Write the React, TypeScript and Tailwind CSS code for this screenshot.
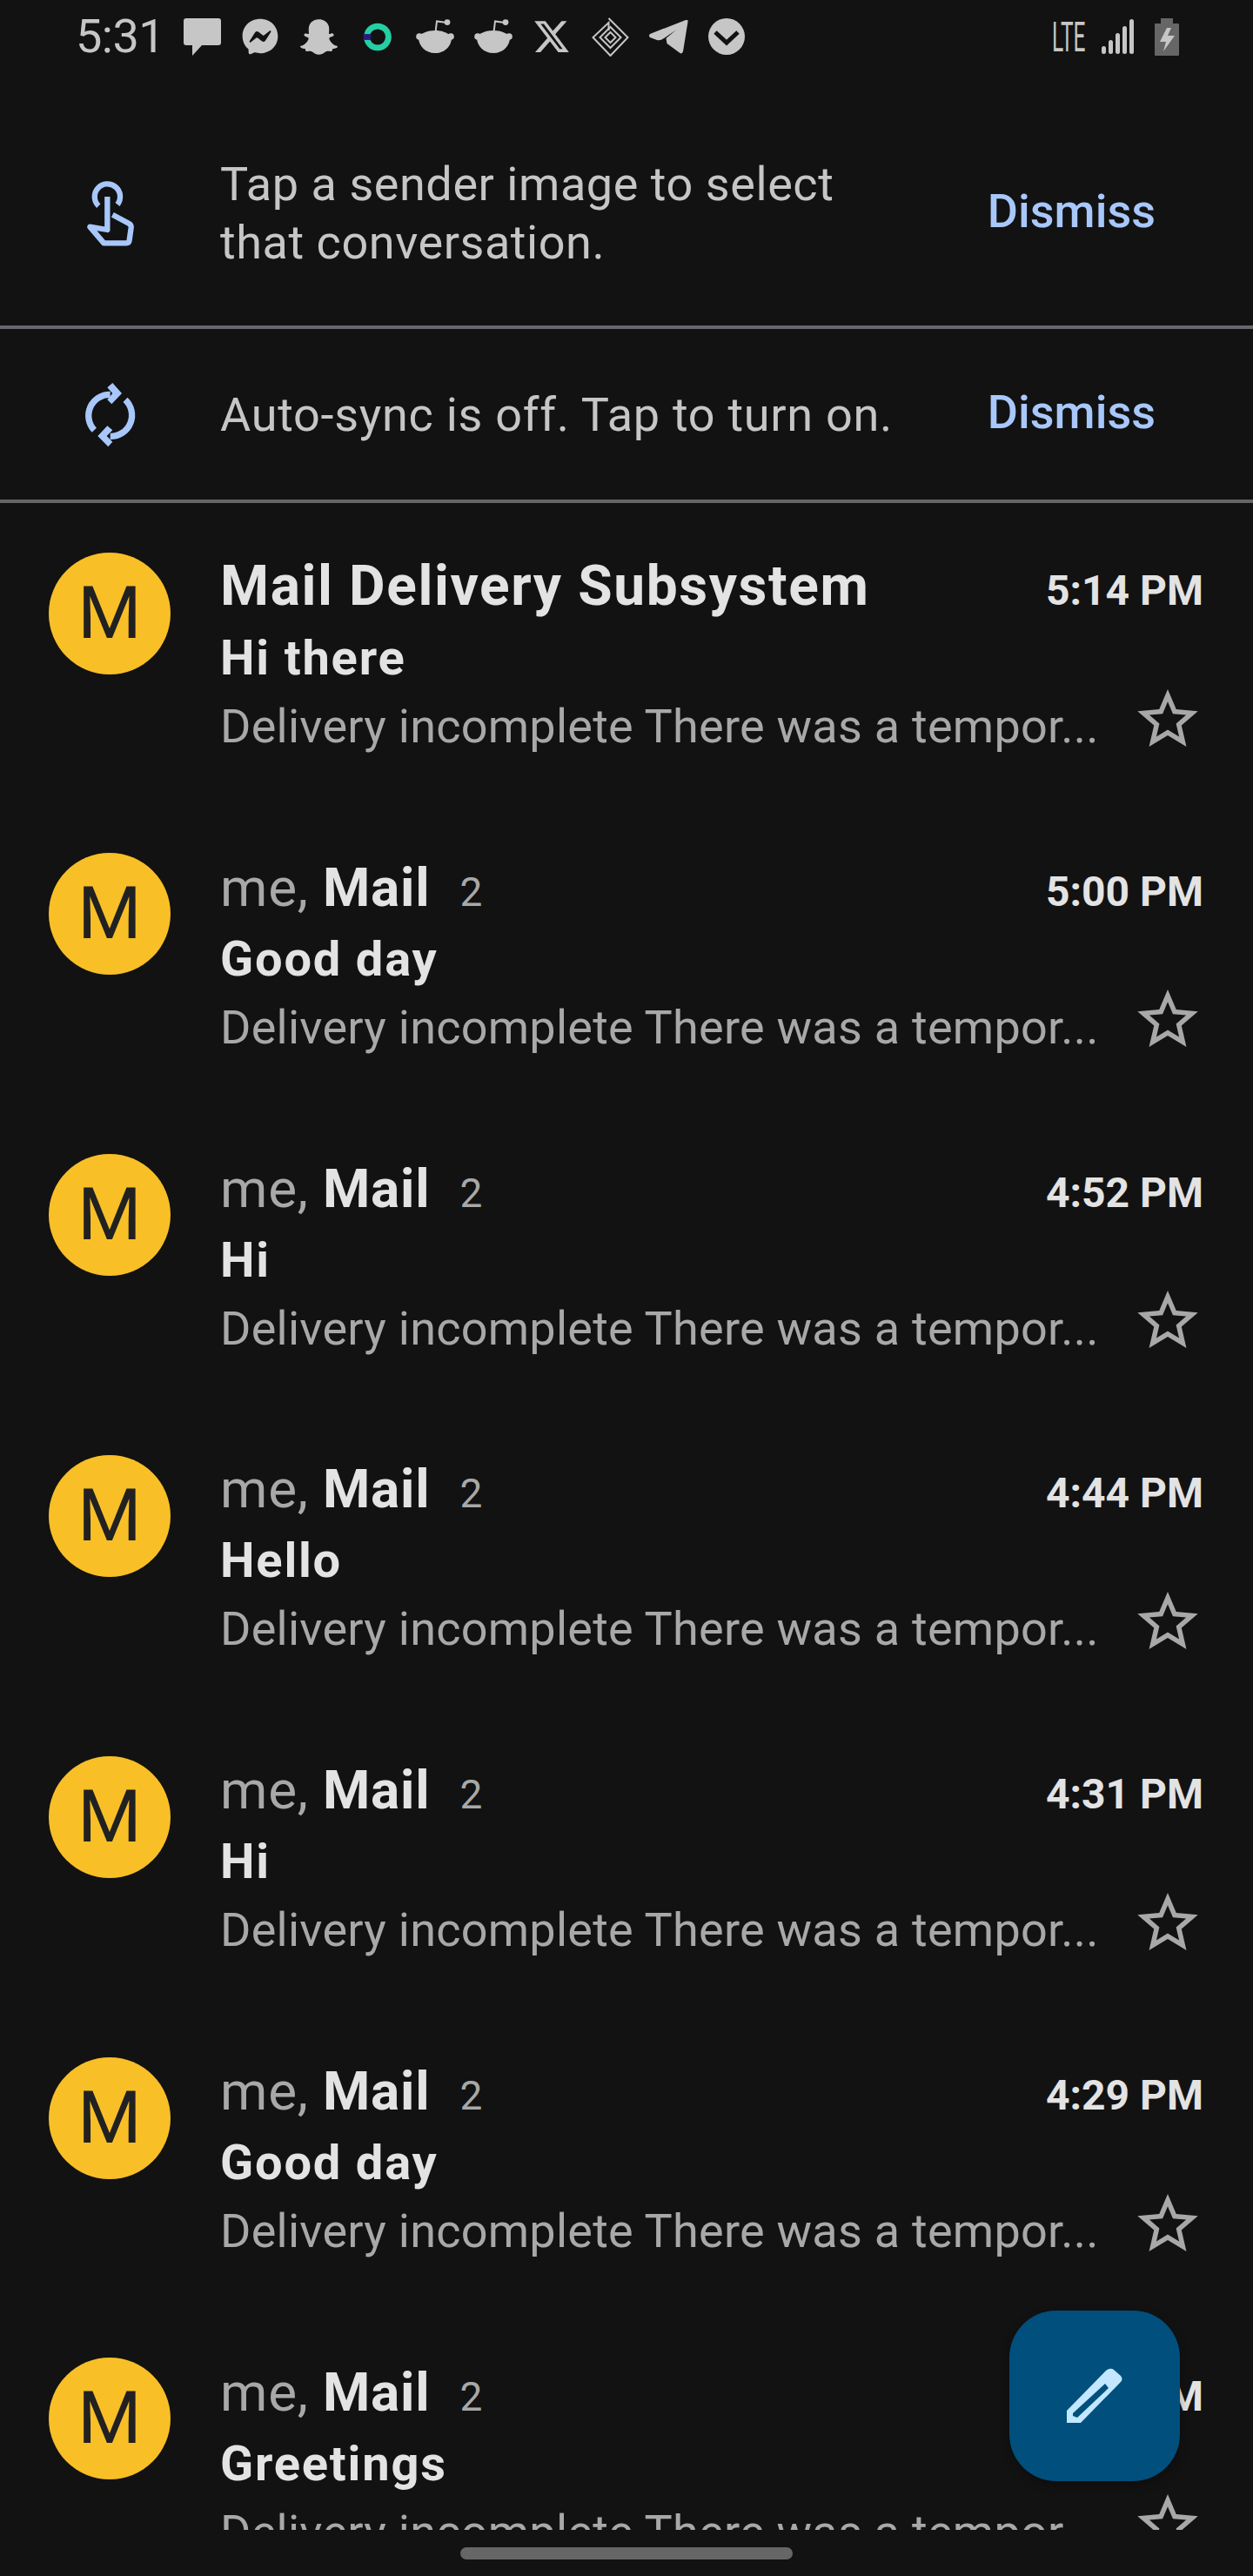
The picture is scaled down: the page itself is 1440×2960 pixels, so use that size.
import React from 'react';
import { FaFacebookMessenger, FaSnapchatGhost } from 'react-icons/fa';
import { RiTwitterXFill } from 'react-icons/ri';

const font = { fontFamily: 'Roboto, "Noto Sans", sans-serif' };

const threads = [
  { first: true, subject: 'Hi there', time: '5:14 PM' },
  { subject: 'Good day', time: '5:00 PM' },
  { subject: 'Hi', time: '4:52 PM' },
  { subject: 'Hello', time: '4:44 PM' },
  { subject: 'Hi', time: '4:31 PM' },
  { subject: 'Good day', time: '4:29 PM' },
  { subject: 'Greetings', time: '4:25 PM' },
];

const RedditIcon: React.FC<{ className?: string }> = ({ className }) => (
  <svg viewBox="0 0 44 40" className={className} fill="#c6c6c6">
    <circle cx="4" cy="20" r="3.8" />
    <circle cx="40" cy="20" r="3.8" />
    <path d="M3 21C6 16 13 13 22 13s16 3 19 8c0 10-8 18-19 18S3 31 3 21z" />
    <path d="M22.5 15L24 2.5 35 4" fill="none" stroke="#c6c6c6" strokeWidth="2" />
    <circle cx="36" cy="3.6" r="3.4" />
  </svg>
);

const StatusBar = () => (
  <div className="flex h-[84px] items-center pl-[87px] pr-[85px] text-[#c6c6c6]">
    <span className="w-[94px] text-[54px] font-normal leading-none tracking-[-0.5px]">5:31</span>
    <svg viewBox="0 0 43 43" className="ml-[30px] h-[43px] w-[43px]" fill="#c6c6c6">
      <path d="M3 0h37a3 3 0 0 1 3 3v25a3 3 0 0 1-3 3H21L10 43V31H3a3 3 0 0 1-3-3V3a3 3 0 0 1 3-3z" />
    </svg>
    <FaFacebookMessenger className="ml-[24px] h-[42px] w-[42px]" />
    <FaSnapchatGhost className="ml-[24px] h-[43px] w-[45px]" />
    <svg viewBox="0 0 34 34" className="ml-[28px] h-[33px] w-[34px]">
      <circle cx="17" cy="17" r="12.8" fill="none" stroke="#25cfa4" strokeWidth="7" />
      <rect x="0" y="13.5" width="9" height="7" fill="#2b1a7c" />
    </svg>
    <RedditIcon className="ml-[27px] h-[40px] w-[44px]" />
    <RedditIcon className="ml-[23px] h-[40px] w-[44px]" />
    <RiTwitterXFill className="ml-[20px] h-[48px] w-[50px]" />
    <svg viewBox="0 0 42 45" className="ml-[21px] h-[45px] w-[43px]" fill="none" stroke="#c6c6c6" strokeWidth="2">
      <path d="M19 1L41 23 21 44 1 23 19 6v9" />
      <path d="M21 11l12 12-12 12L9 23z" />
      <path d="M21 17l6 6-6 6-6-6z" />
    </svg>
    <svg viewBox="0 0 45 39" className="ml-[23px] h-[39px] w-[45px]" fill="#c6c6c6">
      <path d="M1 16L42 0q3-1 2.500 2L39 36q-1 3.500-3.500 2L20.500 27l-1-6L31 11.500 17 21q-4 3-8 2l-8-3q-2-2 0-4z" />
    </svg>
    <svg viewBox="0 0 42 42" className="ml-[23px] h-[42px] w-[42px]">
      <circle cx="21" cy="21" r="21" fill="#c6c6c6" />
      <path d="M8 16l13 12 13-12" fill="none" stroke="#121212" strokeWidth="5" />
    </svg>
    <div className="ml-auto w-[41px] overflow-visible">
      <span className="block origin-left scale-x-50 text-[49px] leading-none">LTE</span>
    </div>
    <svg viewBox="0 0 37 40" className="ml-[16px] h-[40px] w-[37px]" fill="#c6c6c6">
      <rect x="0" y="31" width="5" height="9" rx="2.500" />
      <rect x="8" y="24" width="5" height="16" rx="2.500" />
      <rect x="16" y="16" width="5" height="24" rx="2.500" />
      <rect x="24" y="8" width="5" height="32" rx="2.500" />
      <rect x="32" y="0" width="5" height="40" rx="2.500" />
    </svg>
    <svg viewBox="0 0 28 43" className="ml-[24px] h-[43px] w-[28px]">
      <path d="M7 0h14v6h6a1 1 0 0 1 1 1v35a1 1 0 0 1-1 1H1a1 1 0 0 1-1-1V7a1 1 0 0 1 1-1h6z" fill="#666666" />
      <path d="M14 11L6 27h7l-3 11 13-18h-8l4-9z" fill="#c6c6c6" />
    </svg>
  </div>
);

const Banner: React.FC<{ icon: React.ReactNode; className: string; children: React.ReactNode }> = ({ icon, className, children }) => (
  <div className={`flex items-center border-b-4 ${className}`}>
    <div className="ml-[80px] w-[173px] shrink-0">{icon}</div>
    <div className="flex-1 text-[54px] leading-[67px] tracking-[0.55px] text-[#c6c6c6]">{children}</div>
    <span className="mb-[5px] mr-[112px] text-[54px] font-medium leading-[67px] text-[#a8c7fa]">Dismiss</span>
  </div>
);

const Row: React.FC<{ first?: boolean; subject: string; time: string }> = ({ first, subject, time }) => (
  <div className="flex h-[345.83px] shrink-0">
    <div className="w-[253px] shrink-0 pl-[56px] pt-[56.500px]">
      <div className="flex h-[140px] w-[140px] items-center justify-center rounded-full bg-[#f8bf27] text-[84px] font-normal text-[#212121]">M</div>
    </div>
    <div className="flex-1 pr-[57px] pt-[56px]">
      <div className="flex h-[82px] items-baseline justify-between leading-[80px]">
        {first ? (
          <span className="text-[64px] font-bold tracking-[1.6px] text-[#e3e3e3]">Mail Delivery Subsystem</span>
        ) : (
          <span className="text-[62px] tracking-[0.8px] text-[#a8a8a8]">
            me, <span className="font-bold text-[#e3e3e3]">Mail</span>
            <span className="ml-[34px] text-[46px]">2</span>
          </span>
        )}
        <span className="text-[48px] font-bold text-[#e3e3e3]">{time}</span>
      </div>
      <div className="h-[80px] text-[56px] font-bold leading-[80px] tracking-[1.8px] text-[#e3e3e3]">{subject}</div>
      <div className="flex h-[78px] items-center justify-between">
        <span className="text-[54px] leading-[78px] tracking-[0.25px] text-[#a8a8a8]">Delivery incomplete There was a tempor...</span>
        <svg viewBox="2 2 20 19" className="mb-[21px] mr-[6px] h-[66px] w-[70px]" fill="#a8a8a8">
          <path d="M22 9.240l-7.190-.620L12 2 9.190 8.630 2 9.240l5.460 4.730L5.820 21 12 17.270 18.180 21l-1.630-7.030L22 9.240zM12 15.400l-3.760 2.270 1-4.280-3.320-2.880 4.380-.380L12 6.100l1.710 4.040 4.380.380-3.320 2.880 1 4.280L12 15.400z" />
        </svg>
      </div>
    </div>
  </div>
);

export default function App() {
  return (
    <div className="relative h-[2960px] w-[1440px] overflow-hidden bg-[#121212]" style={font}>
      <StatusBar />
      <Banner
        className="h-[294px] border-[#68676e] pt-[32px]"
        icon={
          <svg viewBox="0 0 300 330" className="h-[110px] w-[100px]" fill="none" stroke="#a8c7fa" strokeWidth="19" strokeLinejoin="round">
            <path d="M100 140A44 44 0 1 1 165 135" />
            <path d="M130 108V222L70 212 118 268H195Q205 268 206 258L212 215Q213 205 204 200L148 170" />
          </svg>
        }
      >
        Tap a sender image to select
        <br />
        that conversation.
      </Banner>
      <Banner
        className="h-[200px] border-[#666666]"
        icon={
          <svg viewBox="0 0 300 300" className="h-[100px] w-[100px]" fill="#a8c7fa">
            <path d="M85 205A73 73 0 0 1 140 82" fill="none" stroke="#a8c7fa" strokeWidth="22" />
            <path d="M192 100A73 73 0 0 1 140 226" fill="none" stroke="#a8c7fa" strokeWidth="22" />
            <path d="M148 42L180 78 145 115 130 100 148 78 130 58z" />
            <path d="M130 190L97 225 133 262 148 245 128 225 148 205z" />
          </svg>
        }
      >
        <span className="tracking-[0.72px]">Auto-sync is off. Tap to turn on.</span>
      </Banner>
      <div className="flex h-[2329px] flex-col overflow-hidden">
        {threads.map((t, i) => (
          <Row key={i} first={t.first} subject={t.subject} time={t.time} />
        ))}
      </div>
      <div className="pt-[20px]">
        <div className="mx-auto h-[14px] w-[382px] rounded-full bg-[#666666]" />
      </div>
      <div className="absolute bottom-[109px] right-[84px] flex h-[196px] w-[196px] items-center justify-center rounded-[54px] bg-[#004f7d] shadow-[0_4px_12px_rgba(0,0,0,0.3)]">
        <svg viewBox="0 0 64 64" className="h-[64px] w-[64px]" fill="#c2e7ff" fillRule="evenodd">
          <path d="M0 49L45 3Q50-1 54 2L62 9Q65 13 62 16L16 63H0zM7 52v3l5 2L48 23l-4-5z" />
        </svg>
      </div>
    </div>
  );
}
